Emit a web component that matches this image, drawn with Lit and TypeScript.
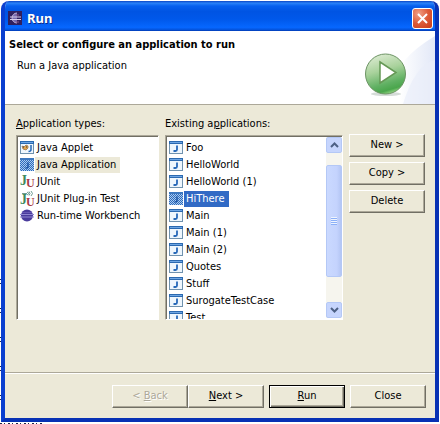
import { LitElement, html, css, svg } from "lit";
import { customElement, property, state } from "lit/decorators.js";

type IconName = "app" | "selected" | "applet" | "junit" | "plugin" | "eclipse";

const letters = css`
  .green { fill: #3f8a5c; }
  .red { fill: #a83a48; }
  text { font: bold 14px "Liberation Serif", serif; }
  .small { font-size: 12px; }
`;

const dither = svg`
  <defs>
    <pattern id="dots" width="2" height="2" patternUnits="userSpaceOnUse">
      <rect width="2" height="2" fill="#a9cbee"/>
      <rect width="1" height="1" fill="#2f6bbd"/>
      <rect x="1" y="1" width="1" height="1" fill="#2f6bbd"/>
    </pattern>
  </defs>`;

const frame = svg`
  <rect x=".5" y="1.5" width="13" height="12" fill="#eef6fd" stroke="#7092ae"/>
  <rect x="0" y="1" width="14" height="3" fill="#2b69b0"/>
  <rect x="1" y="2" width="12" height="1" fill="#6ea6e4"/>`;

const icons: Record<IconName, unknown> = {
  app: svg`${frame}<path d="M8 5.500v4q0 1.500-1.500 1.500H4.500" fill="none" stroke="#2668b8" stroke-width="1.800"/>`,
  selected: svg`${dither}<rect y="1" width="14" height="13" fill="url(#dots)"/>
    <rect y="1" width="14" height="2" fill="#3d78c0"/>
    <path d="M8 5.500v4q0 1.500-2.500 1.500" fill="none" stroke="#2159a8" stroke-width="1.500"/>`,
  applet: svg`${frame}
    <path d="M2 6l2 1 2-2 2 1v2l-2 2-3-1z" fill="#e4a64c" stroke="#8d6748" stroke-width=".7"/>
    <path d="M3 7h1M6 7h1" stroke="#333"/>
    <path d="M11 5v4.500q0 2-2.500 2" fill="none" stroke="#2668b8" stroke-width="1.500"/>`,
  junit: svg`<text class="green" x="0" y="11">J</text><text class="red small" x="6" y="13">U</text>`,
  plugin: svg`<text class="green" x="0" y="13">J</text><text class="red small" x="6" y="15">U</text>
    <path d="M2 2.500h5M7 1l2 1.500L7 4M9 .5q2 2 0 4M11 0q3 2.500 0 5" fill="none" stroke="#6f9c94"/>`,
  eclipse: svg`<circle cx="7" cy="7.500" r="6" fill="#4a3c9c"/>
    <path d="M0 6.500h14M0 9h14" stroke="#8f86d0"/><path d="M2 4.500h10" stroke="#6758b4"/>`,
};

@customElement("item-list")
class ItemList extends LitElement {
  @property() label = "";
  @property({ attribute: false }) items: [string, IconName][] = [];
  @property({ type: Number }) selected = 0;
  @property({ type: Boolean }) active = false;

  static styles = [
    letters,
    css`
      :host { display: block; min-width: 0; flex: 1; }
      .list { list-style: none; margin: 0; padding: 3px 0 0 3px; outline: none; }
      .item { display: flex; align-items: center; height: 17px; white-space: nowrap; cursor: default; }
      .icon { width: 15px; height: 15px; flex: none; overflow: visible; }
      .text { padding: 0 4px 0 2px; line-height: 16px; }
      .selected .text { background: #ece9d8; }
      .active .selected .text { background: #316ac5; color: #fff; }
    `,
  ];

  render() {
    return html`<ul class="list ${this.active ? "active" : ""}" role="listbox" tabindex="0" aria-label=${this.label}>
      ${this.items.map(
        ([text, icon], i) => html`<li
          class="item ${i === this.selected ? "selected" : ""}"
          role="option"
          aria-selected=${i === this.selected}
          @click=${() => (this.selected = i)}
        ><svg class="icon" viewBox="0 0 15 15" aria-hidden="true">${icons[icon]}</svg><span class="text">${text}</span></li>`
      )}
    </ul>`;
  }
}

@customElement("app-root")
class AppRoot extends LitElement {
  @state() private types: [string, IconName][] = [
    ["Java Applet", "applet"],
    ["Java Application", "selected"],
    ["JUnit", "junit"],
    ["JUnit Plug-in Test", "plugin"],
    ["Run-time Workbench", "eclipse"],
  ];

  @state() private apps: [string, IconName][] = [
    "Foo", "HelloWorld", "HelloWorld (1)", "HiThere", "Main", "Main (1)",
    "Main (2)", "Quotes", "Stuff", "SurogateTestCase", "Test",
  ].map((name) => [name, name === "HiThere" ? "selected" : "app"]);

  static styles = css`
    :host {
      display: flex;
      box-sizing: border-box;
      min-height: 100vh;
      padding: 1px 1px 2px;
      background:
        repeating-linear-gradient(#22264a 0 1px, transparent 1px 4px, #22264a 4px 5px, transparent 5px 29px) 0 100% / 1px 145px no-repeat,
        repeating-linear-gradient(90deg, #22264a 0 2px, transparent 2px 4px, #22264a 4px 5px, transparent 5px 8px) 0 100% / 42px 1px no-repeat,
        #fff;
      color: #000;
      font: 11px/14px "DejaVu Sans Condensed", "DejaVu Sans", sans-serif;
      font-stretch: condensed;
    }
    .window {
      flex: 1;
      min-width: 0;
      display: flex;
      flex-direction: column;
      box-sizing: border-box;
      background: #ece9d8;
      border: solid #0a3fd0;
      border-width: 0 4px 4px 4px;
      border-right-color: #0831b4;
      border-bottom-color: #0831b4;
      border-radius: 8px 8px 0 0;
      overflow: hidden;
    }
    .titlebar {
      display: flex;
      align-items: center;
      gap: 5px;
      height: 30px;
      margin: 0 -4px;
      padding: 4px 6px 0 7px;
      box-sizing: border-box;
      color: #fff;
      background: linear-gradient(#0a45c4 0, #2a83f8 7%, #0660ee 17%, #0054e3 35%, #0058ea 60%, #0667ff 88%, #0453dc 96%, #0238b0);
    }
    .logo { width: 14px; height: 14px; }
    .title { flex: 1; margin: 0; font: bold 13px/16px "Noto Sans", sans-serif; text-shadow: 1px 1px #0a2d8c; }
    .close {
      width: 21px; height: 21px; padding: 0;
      display: grid; place-items: center;
      border: 1px solid #fff; border-radius: 3px;
      background: radial-gradient(circle at 30% 25%, #f0a087, #dd5a38 50%, #c83a18);
    }
    .header {
      display: flex;
      justify-content: space-between;
      height: 73px;
      background: #fff;
      border-bottom: 1px solid #aca899;
    }
    .intro { padding: 7px 0 0 4px; }
    .heading { margin: 0; font-size: 11px; line-height: 14px; font-weight: bold; }
    .message { margin: 7px 0 0 8px; }
    .banner { width: 90px; height: 73px; flex: none; }
    .body {
      display: grid;
      grid-template-columns: minmax(0, 143fr) minmax(0, 178fr) 76px;
      grid-template-rows: auto 185px;
      column-gap: 6px;
      row-gap: 4px;
      padding: 12px 10px 0 11px;
    }
    .label { white-space: nowrap; }
    .box {
      display: flex;
      overflow: hidden;
      background: #fff;
      border: 1px solid #fff;
      border-top-color: #aca899;
      border-left-color: #aca899;
      box-shadow: inset 1px 1px #716f64;
    }
    .scrollbar {
      width: 16px; margin: 1px 0 1px 0;
      display: flex; flex-direction: column;
      background: #f6f5ee;
    }
    .arrow {
      height: 16px; width: 16px; padding: 0; flex: none;
      display: grid; place-items: center;
      border: 1px solid #b4c8f6; border-radius: 2px;
      background: #c6d5fd;
    }
    .track { flex: 1; padding: 12px 0 25px; display: flex; }
    .thumb {
      flex: 1; display: grid; place-items: center;
      border: 1px solid #b4c8f6; border-radius: 2px;
      background: linear-gradient(90deg, #cad9ff, #c4d3fd 70%, #b4c6f4);
    }
    .grip { width: 6px; height: 8px; background: repeating-linear-gradient(#eef4fe 0 1px, #8cb0f8 1px 2px); }
    .side { display: flex; flex-direction: column; gap: 5px; margin-top: -1px; }
    .button {
      box-sizing: border-box;
      width: 76px; height: 23px; padding: 0 0 1px;
      font: inherit; color: inherit;
      background: #ece9d8;
      border: 1px solid;
      border-color: #fff #716f64 #716f64 #fff;
      box-shadow: inset -1px -1px #aca899;
    }
    .button:disabled { color: #aca899; text-shadow: 1px 1px #fff; }
    .default { border-color: #000; box-shadow: inset 1px 1px #fff, inset -1px -1px #716f64, inset -2px -2px #aca899; }
    .footer {
      display: flex;
      justify-content: flex-end;
      gap: 5px;
      margin-top: auto;
      padding: 12px 9px 10px;
      border-top: 1px solid #aca899;
      box-shadow: inset 0 1px #fff;
    }
    .pair { display: flex; }
  `;

  render() {
    return html`
      <main class="window">
        <header class="titlebar">
          <svg class="logo" viewBox="0 0 14 14" aria-hidden="true">
            <rect width="14" height="14" fill="#30205e"/>
            <path d="M9 2a5 5 0 1 0 0 10" fill="#7569ae" stroke="#bcaed8"/>
            <path d="M2 6h11M2 8.500h11" stroke="#d8cdea"/>
            <path d="M8 4h3M8 11h3" stroke="#8a5684"/>
          </svg>
          <h1 class="title">Run</h1>
          <button class="close" aria-label="Close window">
            <svg width="13" height="13" viewBox="0 0 13 13"><path d="M2 2l9 9M11 2l-9 9" stroke="#fff" stroke-width="2"/></svg>
          </button>
        </header>
        <section class="header">
          <div class="intro">
            <h2 class="heading">Select or configure an application to run</h2>
            <p class="message">Run a Java application</p>
          </div>
          <svg class="banner" viewBox="0 0 90 73" aria-hidden="true">
            <defs>
              <linearGradient id="sweep" x1="0" x2="1"><stop offset=".2" stop-color="#fff"/><stop offset="1" stop-color="#e2e8f7"/></linearGradient>
              <linearGradient id="ball" x1=".3" y1="0" x2=".6" y2="1"><stop offset="0" stop-color="#dcebd2"/><stop offset=".4" stop-color="#a9d29c"/><stop offset=".75" stop-color="#5fb062"/><stop offset=".9" stop-color="#4aa64c"/><stop offset="1" stop-color="#9ad888"/></linearGradient>
            </defs>
            <path d="M90 5Q70 17 60 29Q50 45 46 73H90z" fill="url(#sweep)"/>
            <path d="M90 29Q70 34 58 73H90z" fill="#e9eefa" opacity=".7"/>
            <ellipse cx="41" cy="63" rx="15" ry="2" fill="#d5dcd8"/>
            <circle cx="40.500" cy="43" r="20" fill="url(#ball)" stroke="#6d9465"/>
            <path d="M35 31v21l16-10.500z" fill="#fff" stroke="#659856" stroke-width="1.500"/>
          </svg>
        </section>
        <section class="body">
          <span class="label"><u>A</u>pplication types:</span>
          <span class="label">Existing a<u>p</u>plications:</span>
          <span></span>
          <div class="box">
            <item-list label="Application types" .items=${this.types} .selected=${1}></item-list>
          </div>
          <div class="box">
            <item-list label="Existing applications" .items=${this.apps} .selected=${3} active></item-list>
            <div class="scrollbar">
              <button class="arrow" aria-label="Scroll up"><svg width="9" height="6" viewBox="0 0 9 6"><path d="M1 5l3.500-3.500L8 5" fill="none" stroke="#4d6185" stroke-width="2"/></svg></button>
              <div class="track"><div class="thumb"><span class="grip"></span></div></div>
              <button class="arrow" aria-label="Scroll down"><svg width="9" height="6" viewBox="0 0 9 6"><path d="M1 1l3.500 3.500L8 1" fill="none" stroke="#4d6185" stroke-width="2"/></svg></button>
            </div>
          </div>
          <div class="side">
            <button class="button">New &gt;</button>
            <button class="button">Copy &gt;</button>
            <button class="button">Delete</button>
          </div>
        </section>
        <footer class="footer">
          <div class="pair">
            <button class="button" disabled>&lt; <u>B</u>ack</button>
            <button class="button"><u>N</u>ext &gt;</button>
          </div>
          <button class="button default"><u>R</u>un</button>
          <button class="button">Close</button>
        </footer>
      </main>
    `;
  }
}
